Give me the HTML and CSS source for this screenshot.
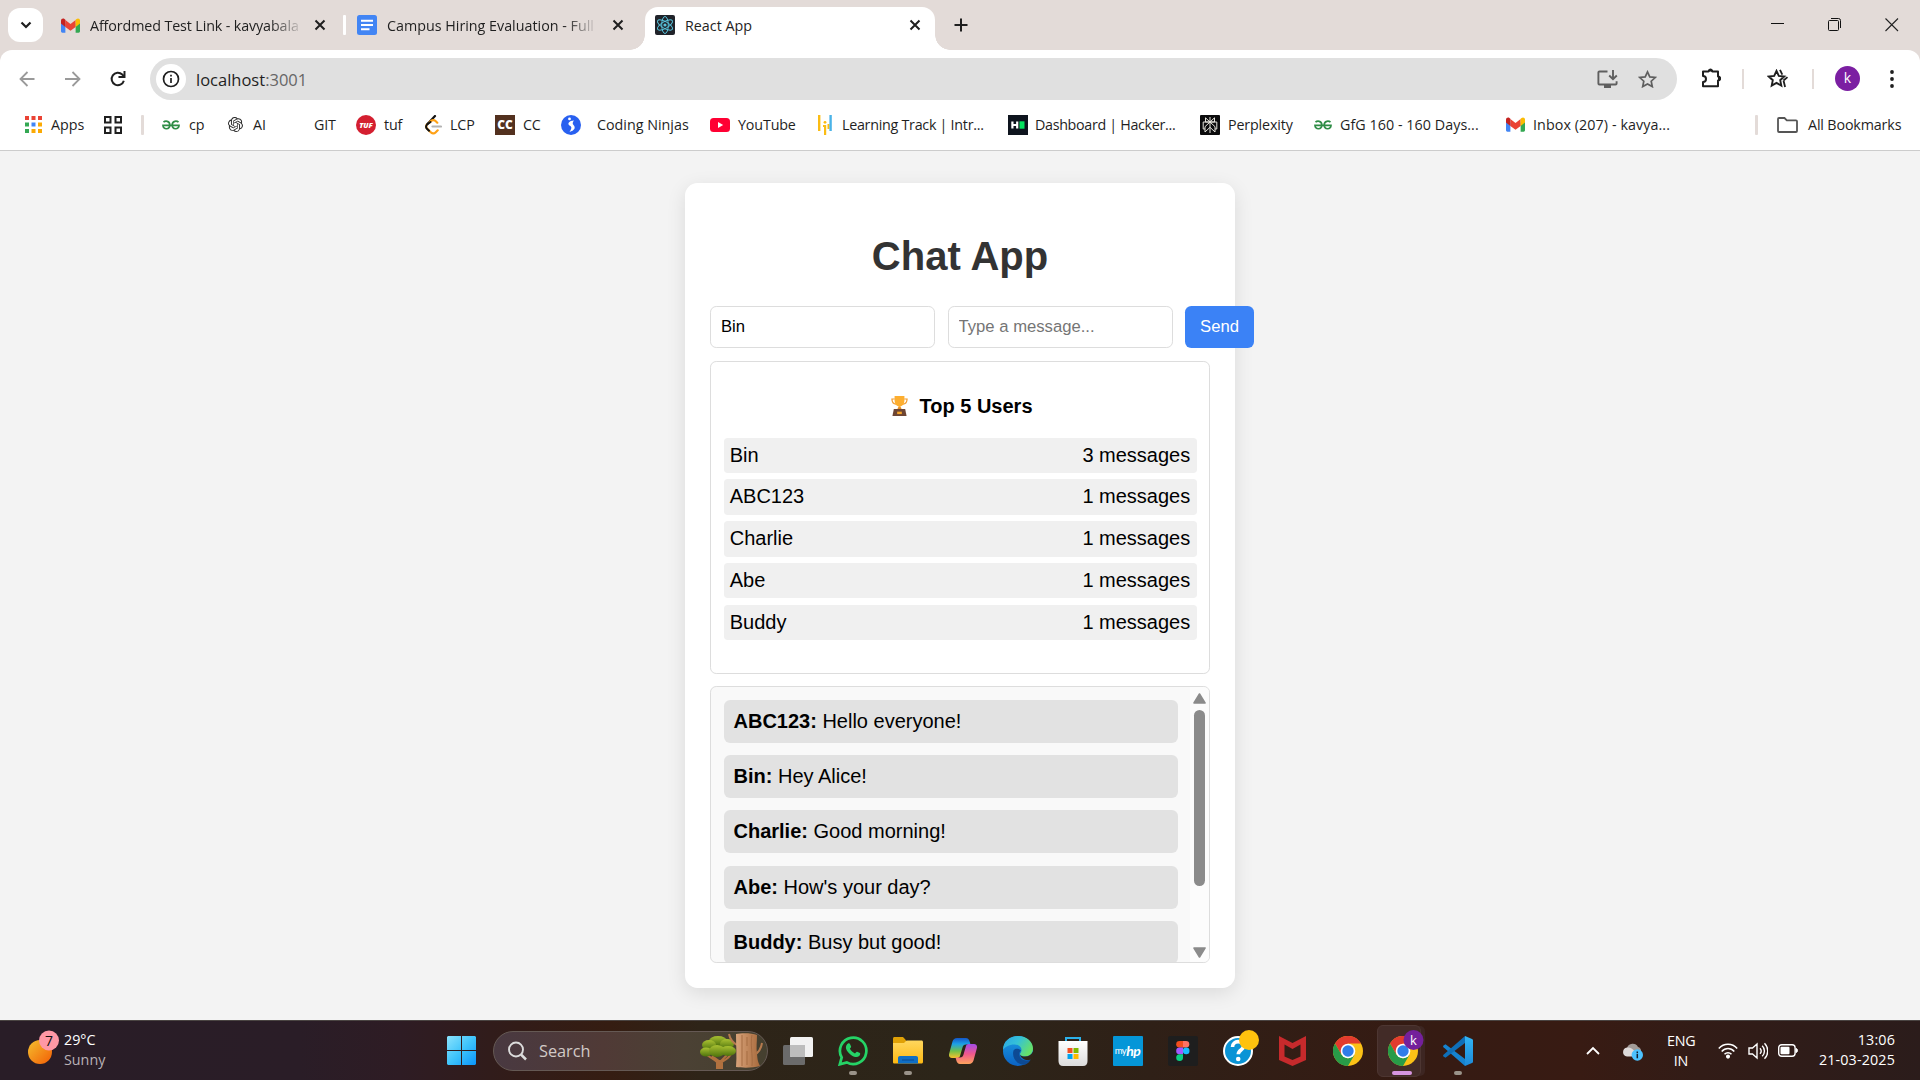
FILE: index.html
```html
<!DOCTYPE html>
<html lang="en">
<head>
<meta charset="utf-8">
<title>React App</title>
<link rel="stylesheet" href="styles.css">
</head>
<body>
<svg class="defs" width="0" height="0" aria-hidden="true">
  <defs>
    <linearGradient id="g-sun" x1="0" y1="0" x2="1" y2="1"><stop offset="0" stop-color="#f5c02f"/><stop offset="1" stop-color="#f25d05"/></linearGradient>
    <linearGradient id="g-win" x1="0" y1="0" x2="1" y2="1"><stop offset="0" stop-color="#8be3fc"/><stop offset=".5" stop-color="#3fc4fb"/><stop offset="1" stop-color="#0a95fb"/></linearGradient>
    <linearGradient id="g-fold" x1="0" y1="0" x2="0" y2="1"><stop offset="0" stop-color="#ffd75e"/><stop offset="1" stop-color="#fdb913"/></linearGradient>
    <linearGradient id="g-leaf" x1="0" y1="0" x2="0" y2="1"><stop offset="0" stop-color="#a9c132"/><stop offset="1" stop-color="#4d720c"/></linearGradient>
    <linearGradient id="g-bark" x1="0" y1="0" x2="1" y2="0"><stop offset="0" stop-color="#d8a37a"/><stop offset="1" stop-color="#a86a3c"/></linearGradient>
    <linearGradient id="g-co1" x1="0" y1="0" x2="0" y2="1"><stop offset="0" stop-color="#1456c8"/><stop offset=".3" stop-color="#1ca0e8"/><stop offset=".65" stop-color="#6fc04a"/><stop offset="1" stop-color="#f8c22c"/></linearGradient>
    <linearGradient id="g-co2" x1="0" y1="0" x2="0" y2="1"><stop offset="0" stop-color="#a34be8"/><stop offset=".5" stop-color="#f0588c"/><stop offset="1" stop-color="#fda45c"/></linearGradient>
    <linearGradient id="g-edge1" x1="0" y1="0" x2="1" y2=".5"><stop offset="0" stop-color="#2aa4e6"/><stop offset=".5" stop-color="#35c1d8"/><stop offset="1" stop-color="#66e06a"/></linearGradient>
    <linearGradient id="g-edge2" x1="0" y1="0" x2="0" y2="1"><stop offset="0" stop-color="#1b9de2"/><stop offset="1" stop-color="#0b62c4"/></linearGradient>
    <linearGradient id="g-vs" x1="0" y1="0" x2="0" y2="1"><stop offset="0" stop-color="#32b5f5"/><stop offset="1" stop-color="#1d8ad8"/></linearGradient>
    <linearGradient id="g-bag" x1="0" y1="0" x2="0" y2="1"><stop offset="0" stop-color="#fff"/><stop offset="1" stop-color="#dcdcdc"/></linearGradient>
    <symbol id="gmail" viewBox="0 0 20 15"><path fill="#4285f4" d="M0 2v11.6C0 14.4.6 15 1.4 15h3.2V5.5z"/><path fill="#34a853" d="M15.4 15h3.2c.8 0 1.4-.6 1.4-1.4V2l-4.6 3.5z"/><path fill="#ea4335" d="M4.6 9V1.8L10 5.9l5.4-4.1V9L10 13z"/><path fill="#fbbc04" d="M15.4 1.5V9L20 5.5V2.2c0-2-2.2-2.8-3.6-1.6z"/><path fill="#c5221f" d="M0 2.2v3.3L4.6 9V1.5L3.6.6C2.200-.6 0 .4 0 2.200z"/></symbol>
    <symbol id="close" viewBox="0 0 12 12"><path d="M1.500 1.500l9 9M10.500 1.500l-9 9" stroke="#1f1f1f" stroke-width="2" fill="none"/></symbol>
    <symbol id="gfg" viewBox="0 0 18 10"><g fill="none" stroke="#2f8d46" stroke-width="1.700"><path d="M1.500 2.200C3 .8 7.800.4 7.800 5c0 4.800-6.800 5-6.800.4h16c0 4.600-6.800 4.400-6.800-.4 0-4.600 4.800-4.200 6.300-2.800"/></g></symbol>
    <symbol id="chrome" viewBox="0 0 30 30"><circle cx="15" cy="15" r="15" fill="#fbc116"/><path fill="#e33b2e" d="M2 7.500A15 15 0 0 1 28 7.500H15L8.500 18.800z"/><path fill="#289b48" d="M2 7.500A15 15 0 0 0 15 30l6.500-11.200L15 22.500 8.500 18.800z"/><circle cx="15" cy="15" r="7.300" fill="#fff"/><circle cx="15" cy="15" r="5.700" fill="#2f7de9"/></symbol>
  </defs>
</svg>

<header class="browser">
  <div class="tabstrip">
    <button class="tabsearch"><svg width="12" height="8" viewBox="0 0 12 8"><path d="M1.500 1.500L6 6l4.500-4.500" fill="none" stroke="#1f1f1f" stroke-width="2.200"/></svg></button>
    <div class="tab tab-mail"><svg class="fav" width="19" height="15"><use href="#gmail"/></svg><span class="tab-title fade">Affordmed Test Link - kavyabala</span><svg width="12" height="12"><use href="#close"/></svg></div>
    <i class="tab-sep"></i>
    <div class="tab tab-docs"><svg class="fav" width="20" height="20" viewBox="0 0 20 20"><rect width="20" height="20" rx="2.500" fill="#4285f4"/><path d="M4 5.700h12M4 10h12M4 14.300h8.500" stroke="#fff" stroke-width="2"/></svg><span class="tab-title fade">Campus Hiring Evaluation - Full</span><svg width="12" height="12"><use href="#close"/></svg></div>
    <div class="tab tab-active"><svg class="fav" width="20" height="20" viewBox="0 0 20 20"><rect width="20" height="20" rx="2" fill="#20232a"/><g fill="none" stroke="#58c4dc" stroke-width="1"><ellipse cx="10" cy="10" rx="8.500" ry="3.300" transform="rotate(30 10 10)"/><ellipse cx="10" cy="10" rx="8.500" ry="3.300" transform="rotate(90 10 10)"/><ellipse cx="10" cy="10" rx="8.500" ry="3.300" transform="rotate(150 10 10)"/></g><circle cx="10" cy="10" r="1.600" fill="#58c4dc"/></svg><span class="tab-title">React App</span><svg width="12" height="12"><use href="#close"/></svg></div>
    <svg class="newtab" width="14" height="14" viewBox="0 0 14 14"><path d="M7 .5v13M.5 7h13" stroke="#1f1f1f" stroke-width="2"/></svg>
    <div class="winctl">
      <svg width="14" height="14" viewBox="0 0 14 14"><path d="M0 5.500h13" stroke="#111"/></svg>
      <svg width="14" height="14" viewBox="0 0 14 14" fill="none" stroke="#111"><rect x=".5" y="2.500" width="10" height="10" rx="1"/><path d="M3 .5h7.500a2 2 0 0 1 2 2V10"/></svg>
      <svg width="14" height="14" viewBox="0 0 14 14"><path d="M.5.500l12.500 12.500M13 .5L.5 13" stroke="#222" stroke-width="1.100"/></svg>
    </div>
  </div>

  <div class="toolbar">
    <svg class="nav-back" width="16" height="16" viewBox="0 0 16 16" fill="none" stroke="#9a9a9a" stroke-width="1.800"><path d="M15.500 8H1.500M8.500 1L1.500 8l7 7"/></svg>
    <svg class="nav-fwd" width="16" height="16" viewBox="0 0 16 16" fill="none" stroke="#9a9a9a" stroke-width="1.800"><path d="M0 8h14.500M7.500 1l7 7-7 7"/></svg>
    <svg class="nav-reload" width="16" height="16" viewBox="0 0 17 17" fill="none" stroke="#1f1f1f" stroke-width="2.100"><path d="M14.700 10.300A6.600 6.600 0 1 1 13 3.800l2 2"/><path d="M15.400 0v6.400H9"/></svg>
    <div class="omnibox">
      <span class="siteinfo"><svg width="18" height="18" viewBox="0 0 18 18"><circle cx="9" cy="9" r="7.500" fill="none" stroke="#1f1f1f" stroke-width="1.700"/><path d="M9 8v5M9 4.800v1.800" stroke="#1f1f1f" stroke-width="1.700"/></svg></span>
      <span class="url">localhost<span class="port">:3001</span></span>
      <svg class="install" width="21" height="18" viewBox="0 0 21 18" fill="none" stroke="#5f5f5f" stroke-width="1.900"><path d="M10.500 1.500H2.400a1 1 0 0 0-1 1v11a1 1 0 0 0 1 1h16.200a1 1 0 0 0 1-1v-2.200M16 0v9M12.200 5.500L16 9.200l3.800-3.700"/><path d="M7 16.500h7" stroke-width="3"/></svg>
      <svg class="star" width="19" height="18" viewBox="0 0 19 18"><path d="M9.500 1.900l2.300 5 5.400.6-4 3.700 1.100 5.400-4.800-2.700-4.800 2.700 1.100-5.400-4-3.700 5.400-.6z" fill="none" stroke="#5f5f5f" stroke-width="1.700"/></svg>
    </div>
    <svg class="ext" width="21" height="21" viewBox="0 0 21 21"><path d="M2 4.500h5.500a2 2 0 0 1 3.800 0H17v5a2 2 0 0 1 0 4v5.700H2v-4.300a2.800 2.800 0 0 0 0-6z" fill="none" stroke="#1f1f1f" stroke-width="2" stroke-linejoin="round"/><path d="M7.500 4a2 2 0 0 1 4 0zM17.500 9.500a2 2 0 0 1 0 4z" fill="#1f1f1f" stroke="#1f1f1f"/></svg>
    <i class="sep"></i>
    <svg class="media" width="22" height="19" viewBox="0 0 22 19"><path d="M9.500 1.900l2.300 5 5.400.6-4 3.700 1.100 5.400-4.800-2.700-4.800 2.700 1.100-5.400-4-3.700 5.400-.6z" fill="none" stroke="#1f1f1f" stroke-width="1.900"/><path d="M13 .8l2.300 4.800M16.500 11.500l4-3.400M16.500 11.500l1.600 6.500" fill="none" stroke="#1f1f1f" stroke-width="1.800"/></svg>
    <i class="sep"></i>
    <span class="avatar">k</span>
    <svg class="dots" width="4" height="18" viewBox="0 0 4 18" fill="#1f1f1f"><circle cx="2" cy="2" r="1.900"/><circle cx="2" cy="9" r="1.900"/><circle cx="2" cy="16" r="1.900"/></svg>
  </div>

  <nav class="bookmarks">
    <a class="bm bm-apps"><svg width="17" height="17" viewBox="0 0 17 17"><path fill="#ea4335" d="M0 0h4v4H0zM6.500 0h4v4h-4zM13 0h4v4h-4z"/><path fill="#34a853" d="M0 6.500h4v4H0z"/><path fill="#4285f4" d="M6.500 6.500h4v4h-4z"/><path fill="#fbaa04" d="M13 6.500h4v4h-4zM6.500 13h4v4h-4zM13 13h4v4h-4z"/><path fill="#34a853" d="M0 13h4v4H0z"/></svg><span>Apps</span></a>
    <a class="bm bm-grid"><svg width="18" height="18" viewBox="0 0 18 18" fill="none" stroke="#1f1f1f" stroke-width="2"><path d="M1 1h5.500v5.500H1zM11.500 1H17v5.500h-5.500zM1 11.500h5.500V17H1zM11.500 11.500H17V17h-5.500z"/></svg></a>
    <i class="bsep"></i>
    <a class="bm bm-cp"><svg width="18" height="10"><use href="#gfg"/></svg><span>cp</span></a>
    <a class="bm bm-ai"><svg width="15" height="15" viewBox="0 0 24 24" fill="#2b2b2b"><path d="M22.280 9.820a5.980 5.980 0 0 0-.52-4.910 6.050 6.050 0 0 0-6.510-2.900A6.070 6.070 0 0 0 4.980 4.180a5.980 5.980 0 0 0-4 2.900 6.050 6.050 0 0 0 .74 7.100 5.980 5.980 0 0 0 .51 4.910 6.050 6.050 0 0 0 6.520 2.900A5.980 5.980 0 0 0 13.260 24a6.060 6.060 0 0 0 5.770-4.210 5.990 5.990 0 0 0 4-2.900 6.060 6.060 0 0 0-.75-7.070zm-9.020 12.610a4.480 4.480 0 0 1-2.880-1.040l4.920-2.840a.8.8 0 0 0 .39-.68v-6.740l2.020 1.170v5.630a4.500 4.500 0 0 1-4.450 4.500zM3.600 18.300a4.470 4.470 0 0 1-.54-3.010l4.930 2.850a.77.77 0 0 0 .78 0l5.840-3.370v2.330l-4.870 2.840a4.500 4.500 0 0 1-6.140-1.640zM2.340 7.900a4.490 4.490 0 0 1 2.370-1.980v5.700a.77.77 0 0 0 .39.680l5.810 3.350-2.020 1.170-4.830-2.790A4.500 4.500 0 0 1 2.340 7.900zm16.600 3.860L13.100 8.360l2.020-1.160 4.830 2.790a4.490 4.490 0 0 1-.68 8.100v-5.680a.79.79 0 0 0-.33-.65zm2-3.020l-4.910-2.870a.78.78 0 0 0-.79 0L9.410 9.230V6.900l4.900-2.830a4.500 4.500 0 0 1 6.630 4.670zM8.310 12.860l-2.020-1.160V6.070a4.500 4.500 0 0 1 7.370-3.450L8.700 5.460a.8.8 0 0 0-.39.680zm1.100-2.360L12 9l2.610 1.500v3L12 15l-2.600-1.500z"/></svg><span>AI</span></a>
    <a class="bm bm-git"><span>GIT</span></a>
    <a class="bm bm-tuf"><b class="ic-tuf">TUF</b><span>tuf</span></a>
    <a class="bm bm-lcp"><svg width="17" height="20" viewBox="0 0 17 20" fill="none" stroke-linecap="round"><path d="M10 1L2 9.500" stroke="#111" stroke-width="2.200"/><path d="M2 9.500c-1.300 1.500-1 3 0 4L5.500 17c1.500 1.500 3.500 2 5 .5l2.200-2.200M4.500 7.500C7 4.500 9 4.600 10.500 6l1.800 1.700" stroke="#ffa116" stroke-width="2.200"/><path d="M5.500 7L2 9.500c-1.200 1.500-1 3.200 0 4.300l2 2" stroke="#111" stroke-width="2"/><path d="M7.500 11.500H16" stroke="#b3b3b3" stroke-width="2.200"/></svg><span>LCP</span></a>
    <a class="bm bm-cc"><b class="ic-cc">CC</b><span>CC</span></a>
    <a class="bm bm-cn"><svg width="20" height="20" viewBox="0 0 20 20"><circle cx="10" cy="10" r="10" fill="#2860f0"/><path d="M13 5.500C8 5.500 6 9 8.500 10.500s2.500 2.500 0 6.500c5-1.500 6.500-4.500 4-7-1.200-1.300-1-2.700.5-4.500z" fill="#fff"/><circle cx="8.500" cy="3.900" r="1.400" fill="#fff"/></svg><span>Coding Ninjas</span></a>
    <a class="bm bm-yt"><svg width="20" height="14" viewBox="0 0 20 14"><rect width="20" height="14" rx="3.500" fill="#f03"/><path d="M8 4l5.200 3L8 10z" fill="#fff"/></svg><span>YouTube</span></a>
    <a class="bm bm-lt"><svg width="14" height="20" viewBox="0 0 14 20"><path fill="#fbbc14" d="M0 0h2.400v16H0zM5 10h3.200v10H6V12H5z"/><circle cx="7" cy="7.300" r="1.400" fill="#fbbc14"/><path fill="#fbbc14" d="M9.500 9h2v5h-2z"/><path fill="#4ab3e8" d="M11.400 0h2.400v16h-2.400z"/></svg><span>Learning Track | Intr...</span></a>
    <a class="bm bm-hr"><svg width="20" height="20" viewBox="0 0 20 20"><path fill="#0e141e" d="M0 0h20v20H0z"/><path d="M4.400 6.500v7M9.200 6.500v7M4.400 10h5" stroke="#fff" stroke-width="2.200"/><path fill="#05e25f" d="M11.500 6.300h5v7.400h-5z"/></svg><span>Dashboard | Hacker...</span></a>
    <a class="bm bm-px"><svg width="20" height="20" viewBox="0 0 20 20"><rect width="20" height="20" rx="1" fill="#0b0b0c"/><path d="M10 2v16M5.500 2.800V7L10 7l4.500-4.200V7H10L5.500 2.800M10 7l-5 4.700V17l5-4.700 5 4.700v-5.300L10 7M5 14H3.200V7h13.600v7H15" fill="none" stroke="#e6e4dc" stroke-width="1"/></svg><span>Perplexity</span></a>
    <a class="bm bm-gfg"><svg width="18" height="10"><use href="#gfg"/></svg><span>GfG 160 - 160 Days...</span></a>
    <a class="bm bm-inbox"><svg width="19" height="15"><use href="#gmail"/></svg><span>Inbox (207) - kavya...</span></a>
    <i class="bsep bsep-end"></i>
    <a class="bm bm-all"><svg width="21" height="16" viewBox="0 0 21 16"><path d="M1 2a1 1 0 0 1 1-1h5.500l2.300 2.300H19a1 1 0 0 1 1 1V14a1 1 0 0 1-1 1H2a1 1 0 0 1-1-1z" fill="none" stroke="#555" stroke-width="1.800"/></svg><span>All Bookmarks</span></a>
  </nav>
</header>

<main class="page">
  <section class="chat">
    <h1>Chat App</h1>
    <form class="compose">
      <input type="text" value="Bin">
      <input type="text" placeholder="Type a message...">
      <button type="button">Send</button>
    </form>
    <div class="top-users">
      <h3><svg width="17" height="20" viewBox="0 0 18 23" preserveAspectRatio="none"><path d="M4 3.500H1C1 8 2.800 9.300 5.500 9.500M14 3.500h3c0 4.500-1.800 5.800-4.500 6" fill="none" stroke="#f0992c" stroke-width="1.300"/><path fill="#fdae2f" d="M3.800 0h10.400v5.500c0 4-2 6-4.200 6.500v3H8v-3c-2.200-.5-4.200-2.500-4.200-6.500z"/><path fill="#e58b22" d="M7.500 13h3l1 3h-5z"/><path fill="#6d4534" d="M3 15h12l1.500 8H1.500z"/><path fill="#f6a62b" d="M6.500 18h5v2.800h-5z"/></svg><span>Top 5 Users</span></h3>
      <ul>
        <li><span>Bin</span><span>3 messages</span></li>
        <li><span>ABC123</span><span>1 messages</span></li>
        <li><span>Charlie</span><span>1 messages</span></li>
        <li><span>Abe</span><span>1 messages</span></li>
        <li><span>Buddy</span><span>1 messages</span></li>
      </ul>
    </div>
    <div class="feed">
      <div class="messages">
        <p><strong>ABC123:</strong> Hello everyone!</p>
        <p><strong>Bin:</strong> Hey Alice!</p>
        <p><strong>Charlie:</strong> Good morning!</p>
        <p><strong>Abe:</strong> How's your day?</p>
        <p><strong>Buddy:</strong> Busy but good!</p>
      </div>
      <div class="scrollbar">
        <svg width="13" height="11" viewBox="0 0 13 11"><path d="M6.500 1L12 10H1z" fill="#8b8b8b" stroke="#8b8b8b" stroke-width="1.600" stroke-linejoin="round"/></svg>
        <i class="thumb"></i>
        <svg class="down" width="13" height="11" viewBox="0 0 13 11"><path d="M6.500 10L12 1H1z" fill="#8b8b8b" stroke="#8b8b8b" stroke-width="1.600" stroke-linejoin="round"/></svg>
      </div>
    </div>
  </section>
</main>

<footer class="taskbar">
  <div class="weather">
    <svg width="36" height="36" viewBox="0 0 36 36"><circle cx="12" cy="22" r="12" fill="url(#g-sun)"/><circle cx="21" cy="10.500" r="10" fill="#ff98a5"/><text x="21" y="15.500" text-anchor="middle" class="badge-num">7</text></svg>
    <div><span class="temp">29°C</span><span class="cond">Sunny</span></div>
  </div>
  <div class="apps">
    <svg class="win" width="29" height="29" viewBox="0 0 29 29"><path fill="url(#g-win)" d="M1 0h13v14H0V1zM15 0h13l1 1v13H15zM0 15h14v14H1l-1-1zM15 15h14v13l-1 1H15z"/></svg>
    <div class="search">
      <svg width="19" height="20" viewBox="0 0 19 20" fill="none" stroke="#dcdcdc"><circle cx="8" cy="8.500" r="7" stroke-width="1.900"/><path d="M13 13.500l5 5" stroke-width="2.500"/></svg>
      <span>Search</span>
      <svg class="tree" width="64" height="36" viewBox="0 0 64 36"><path d="M7 22c4 3 8 5 10 7v6h5v-6c3-2 7-4 9-8M12 23l7 5M27 22l-6 6" fill="none" stroke="#b1713f" stroke-width="2"/><path d="M17 27h5v8h-5z" fill="#b1713f"/><g fill="url(#g-leaf)"><ellipse cx="18" cy="8" rx="9" ry="5"/><ellipse cx="9" cy="12" rx="7" ry="5"/><ellipse cx="27" cy="11" rx="7" ry="5"/><ellipse cx="6" cy="19" rx="6" ry="4.500"/><ellipse cx="17" cy="18" rx="8" ry="6"/><ellipse cx="28" cy="18" rx="8" ry="5"/></g><path d="M29 1c1 5 3 8 8 11M62 10c-1 7-4 10-8 12" fill="none" stroke="#b57a4e" stroke-width="2"/><path d="M36 1c6-1 16-1 21 1 0 7-1 12 0 19 .5 6 1 8 3 12-7 2-17 2-24 1 1-11 0-22 0-33z" fill="url(#g-bark)"/><path d="M42 2v31M47 4v9M52 2c-2 9 1 20 0 31M47 18v14" stroke="#a56c42" fill="none"/></svg>
    </div>
    <svg class="taskview" width="30" height="28" viewBox="0 0 30 28"><rect y="8" width="22" height="20" rx="1.500" fill="#6b6b6b"/><rect x="7" width="23" height="20" rx="1.500" fill="#f2f2f2"/><path fill="#bdbdbd" d="M7 8h15v12H8.500L7 18.500z"/></svg>
    <div class="app run"><svg width="30" height="30" viewBox="0 0 30 30"><path d="M1.800 28.300l1.900-6.900a13.200 13.200 0 1 1 5.100 5z" fill="none" stroke="#25d366" stroke-width="2.700"/><path fill="#25d366" d="M10 7.500c1-.6 1.700-.3 2.100.7l1 2.300c.2.600-.8 1.700-1.200 2.200 1.200 2.300 2.800 3.700 5.100 4.700.6-.6 1.500-2 2.200-1.700l2.700 1.300c.7.400.2 2.400-.7 3.100-2 1.600-4.800.9-7.500-.7-2.600-1.600-5-4.400-5.700-6.900-.5-2.200.7-4.200 2-5z"/></svg></div>
    <div class="app run"><svg width="30" height="27" viewBox="0 0 30 27"><path fill="#e0a106" d="M0 1.500C0 .6.600 0 1.500 0H10l3 3.200v4H0z"/><path fill="url(#g-fold)" d="M0 6h11l2.500-2.500h15c.9 0 1.500.6 1.500 1.500v20c0 .9-.6 1.500-1.500 1.500h-27C.6 26.500 0 26 0 25z"/><path fill="#0f6fc5" d="M5 26.500V21c0-1.200.8-2 2-2h16c1.200 0 2 .8 2 2v5.500z"/><path d="M9 23h12" stroke="#0a4b91"/></svg></div>
    <div class="app"><svg width="28" height="26" viewBox="0 0 28 26"><path fill="url(#g-co1)" d="M8 0h9c2 0 3 1.500 3.500 3l1 3.500H17c-2 0-3 1-3.500 3L11 18c-.5 1.600-1.500 2-3.500 2H3c-2.600 0-3.500-2-2.800-4.500l3.300-12C4.200 1.300 5.700 0 8 0z"/><path fill="url(#g-co2)" d="M20 26h-9c-2 0-3-1.500-3.500-3l-1-3.500H11c2 0 3-1 3.500-3L17 8c.5-1.600 1.500-2 3.500-2H25c2.600 0 3.500 2 2.800 4.500l-3.300 12C23.800 24.700 22.300 26 20 26z"/></svg></div>
    <div class="app"><svg width="30" height="30" viewBox="0 0 30 30"><circle cx="15" cy="15" r="15" fill="url(#g-edge2)"/><path fill="url(#g-edge1)" d="M0 14C0 5 7 0 15 0c9 0 15 6 15 12.500 0 5-3.500 8-8 8-3.500 0-5-1.500-5-2.500s1.500-1.300 1.500-4c0-3-3-5.500-7-5.500C6 8.500 1.500 11 0 14z"/><path fill="#0d4a94" d="M10.500 14.500c-2 7 3 14.500 11.500 14.200 3.500-1.500 5-3.500 5.700-5.200-6.500 2.500-12.200-.5-11.200-6.500.3-1.500 1-2 1.500-2.500-2-2-6-2.500-7.500 0z"/><path fill="#2f2517" d="M30 15.500c-1.500 3.500-4.500 5-8 5-2.500 0-4.300-.8-4.900-1.800 1 4 6 6.500 10.600 4.800.5 0 1 .3.600.9l3.700-.4z"/></svg></div>
    <div class="app"><svg width="30" height="30" viewBox="0 0 30 30"><path d="M8 7V2h14v5" fill="none" stroke="#2cb1ea" stroke-width="2"/><path fill="url(#g-bag)" d="M.5 5h29v20c0 3-1.500 5-4.500 5H5c-3 0-4.500-2-4.500-5z"/><path fill="#f25022" d="M9.500 12h5v5h-5z"/><path fill="#7fba00" d="M15.500 12h5v5h-5z"/><path fill="#00a4ef" d="M9.500 18h5v5h-5z"/><path fill="#ffb900" d="M15.500 18h5v5h-5z"/></svg></div>
    <div class="app"><span class="myhp"><em>my</em><b>hp</b></span></div>
    <div class="app"><svg width="30" height="30" viewBox="0 0 30 30"><rect width="30" height="30" rx="2" fill="#1e1e1e"/><path fill="#f24e1e" d="M15 5h-3.500a3.300 3.300 0 0 0 0 6.600H15z"/><path fill="#ff7262" d="M15 5h3a3.300 3.300 0 0 1 0 6.600h-3z"/><path fill="#a259ff" d="M15 11.600h-3.500a3.300 3.300 0 0 0 0 6.600H15z"/><circle cx="18.200" cy="14.900" r="3.300" fill="#1abcfe"/><path fill="#0acf83" d="M15 18.200h-3.500a3.400 3.400 0 1 0 3.500 3.300z"/></svg></div>
    <div class="app"><svg class="help" width="36" height="36" viewBox="0 0 36 36"><circle cx="15" cy="21" r="14" fill="#0a94d6" stroke="#fff" stroke-width="2"/><path d="M9.500 17c0-7 11-7 11-.8 0 4-5.200 3.600-5.200 8" fill="none" stroke="#fff" stroke-width="3.600"/><circle cx="15.200" cy="29" r="2.300" fill="#fff"/><circle cx="26" cy="10" r="10" fill="#ffc20e"/></svg></div>
    <div class="app"><svg width="27" height="30" viewBox="0 0 27 30"><path fill="#c62a2c" d="M0 0l13.500 7L27 0v24l-13.500 6L0 24zM5.500 8.500v12l8 3.500 8-3.500v-12l-8 4.500z" fill-rule="evenodd"/></svg></div>
    <div class="app"><svg width="30" height="30"><use href="#chrome"/></svg></div>
    <div class="app current"><svg class="chrome-k" width="36" height="36" viewBox="0 0 36 36"><use href="#chrome" x="0" y="6" width="30" height="30"/><circle cx="25.500" cy="10" r="10" fill="#74209b"/><text x="25.500" y="14.500" text-anchor="middle" class="chrome-letter">k</text></svg></div>
    <div class="app run"><svg width="30" height="30" viewBox="0 0 30 30"><path fill="#1683cf" d="M2.500 8.200L22 23v7L.5 11.200c-.6-.6-.6-1.200 0-1.700z"/><path fill="#0f6fb8" d="M2.500 21.800L22 7V0L.5 18.800c-.6.600-.6 1.200 0 1.700z"/><path fill="url(#g-vs)" d="M22 0l7 3c.7.400 1 .8 1 1.600v20.800c0 .8-.3 1.200-1 1.600l-7 3z"/></svg></div>
  </div>
  <div class="tray">
    <svg class="caret" width="14" height="9" viewBox="0 0 14 9"><path d="M1 8l6-6 6 6" fill="none" stroke="#fff" stroke-width="1.800"/></svg>
    <svg class="cloud" width="20" height="18" viewBox="0 0 20 18"><path fill="#a39c99" d="M4 5a6 6 0 0 1 11-1c2 .5 3 2 3 4L8 12z"/><path fill="#dedada" d="M4 4.500c3-.5 5 .5 8 4l-1 5H4C-1.500 13-1 5 4 4.500z"/><circle cx="14.300" cy="12" r="5.700" fill="#4cc2ff"/><path d="M14.300 11v4.200M14.300 8.500v1.700" stroke="#123" stroke-width="1.500"/></svg>
    <div class="lang"><span>ENG</span><span>IN</span></div>
    <svg class="wifi" width="20" height="16" viewBox="0 0 20 16" fill="none" stroke="#fff" stroke-width="1.500"><path d="M.8 5.500c5-5.600 13.400-5.600 18.400 0M3.700 8.500c3.500-4 9.100-4 12.600 0M6.500 11.300c2-2.200 5-2.200 7 0"/><circle cx="10" cy="13.600" r="1.300" fill="#fff"/></svg>
    <svg class="vol" width="20" height="18" viewBox="0 0 20 18" fill="none" stroke="#fff" stroke-width="1.400"><path d="M1 6h3.500L9 2v14l-4.500-4H1zM12 6.200c1.400 1.600 1.400 4 0 5.600M14.200 3.700c3 3 3 7.600 0 10.600M16.500 1.200c4.300 4.300 4.300 11.300 0 15.600"/></svg>
    <svg class="bat" width="20" height="13" viewBox="0 0 20 13"><rect x=".7" y=".7" width="16.400" height="11.600" rx="3" fill="none" stroke="#fff" stroke-width="1.400"/><rect x="2.500" y="2.700" width="9" height="7.600" rx="1" fill="#fff"/><path d="M18 4.500c2 .3 2 3.700 0 4z" fill="#fff" stroke="#fff"/></svg>
    <div class="clock"><span>13:06</span><span>21-03-2025</span></div>
  </div>
</footer>
</body>
</html>
```
FILE: styles.css
```css
* { box-sizing: border-box; }
body { margin: 0; width: 1920px; height: 1080px; overflow: hidden; display: flex; flex-direction: column; font-family: "Liberation Sans", Arial, sans-serif; background: #f3f3f3; }
svg { display: block; flex: none; }
.defs { position: absolute; }
i, em { font-style: normal; }

/* Browser chrome */
.browser { height: 151px; flex: none; background: #e3dbd8; border-bottom: 1px solid #ccc; font-family: "Open Sans", "Noto Sans", sans-serif; color: #1f1f1f; display: flex; flex-direction: column; }
.tabstrip { height: 50px; display: flex; align-items: center; padding-left: 8px; }
.tabsearch { width: 35px; height: 34px; border: 0; border-radius: 12px; background: #fff; display: flex; align-items: center; justify-content: center; padding: 0; margin: 0; }
.tab { display: flex; align-items: center; font-size: 14.300px; }
.tab-title { white-space: nowrap; overflow: hidden; flex: 1; letter-spacing: -0.200px; line-height: 22px; padding-top: 2px; }
.tab-mail { width: 265px; margin-left: 18px; }
.tab-mail .fav { margin-right: 10px; }
.tab-mail .tab-title { flex: 0 0 210px; margin-right: 14px; letter-spacing: -0.120px; }
.tab-sep { width: 3px; height: 20px; background: #fff; margin: 0 11px 0 17px; border-radius: 1px; }
.tab-docs { width: 266px; }
.tab-docs .fav { margin-right: 10px; }
.tab-docs .tab-title { flex: 0 0 207px; margin-right: 18px; letter-spacing: 0; }
.fade { -webkit-mask-image: linear-gradient(90deg, #000 86%, transparent 102%); mask-image: linear-gradient(90deg, #000 86%, transparent 102%); }
.tab-active { position: relative; width: 290px; height: 43px; align-self: flex-end; margin-left: 22px; padding: 0 14px 7px 10px; background: #fff; border-radius: 13px 13px 0 0; }
.tab-active .fav { margin-right: 10px; }
.tab-active .tab-title { letter-spacing: 0; }
.tab-active::before, .tab-active::after { content: ""; position: absolute; bottom: 0; width: 15px; height: 15px; }
.tab-active::before { left: -15px; background: radial-gradient(circle at 0 0, transparent 14.500px, #fff 15px); }
.tab-active::after { right: -15px; background: radial-gradient(circle at 100% 0, transparent 14.500px, #fff 15px); }
.newtab { margin-left: 19px; }
.winctl { margin-left: auto; display: flex; gap: 43px; padding-right: 21px; }

.toolbar { height: 55px; background: #fff; border-radius: 12px 12px 0 0; display: flex; align-items: center; padding: 2px 26px 0 19px; }
.nav-fwd { margin-left: 30px; }
.nav-reload { margin-left: 29px; }
.omnibox { width: 1527px; height: 42px; margin: 1px 0 0 24px; border-radius: 21px; background: #e0e0e0; display: flex; align-items: center; padding-left: 6px; }
.siteinfo { width: 30px; height: 30px; border-radius: 50%; background: #fff; display: flex; align-items: center; justify-content: center; }
.url { font-size: 16.500px; margin-left: 10px; line-height: 24px; padding-top: 2px; }
.port { color: #666; }
.install { margin-left: auto; }
.star { margin: 0 20px; }
.ext { margin-left: 24px; margin-top: -3px; }
.sep { width: 2px; height: 20px; background: #e3dbd8; margin-left: 20px; }
.media { margin-left: 23px; }
.media + .sep { margin-left: 23px; }
.avatar { width: 25px; height: 25px; border-radius: 50%; background: #7b1fa2; color: #fff; font-size: 14px; line-height: 23px; text-align: center; margin-left: 21px; }
.dots { margin-left: auto; }

.bookmarks { height: 45px; background: #fff; display: flex; align-items: center; padding: 0 0 6px 25px; font-size: 14.300px; letter-spacing: -0.150px; }
.bm { display: flex; align-items: center; white-space: nowrap; flex: none; height: 24px; gap: 8px; }
.bm-apps { width: 79px; gap: 9px; letter-spacing: 0; }
.bm-grid { width: 37px; }
.bsep { width: 3px; height: 20px; background: #e3dbd8; border-radius: 1px; flex: none; }
.bm-cp { width: 66px; margin-left: 18px; gap: 9px; }
.bm-ai { width: 86px; gap: 10px; }
.bm-git { width: 42px; }
.bm-tuf { width: 69px; }
.bm-lcp { width: 70px; }
.bm-cc { width: 66px; }
.bm-cn { width: 149px; gap: 16px; letter-spacing: 0; }
.bm-yt { width: 108px; }
.bm-lt { width: 190px; gap: 10px; letter-spacing: -0.270px; }
.bm-hr { width: 192px; gap: 7px; letter-spacing: -0.320px; }
.bm-px { width: 114px; }
.bm-gfg { width: 192px; letter-spacing: 0.050px; }
.bm-inbox { width: 249px; gap: 8px; letter-spacing: 0.080px; }
.bm-all { margin-left: 19px; gap: 10px; }
.ic-tuf { width: 20px; height: 20px; border-radius: 50%; background: #d41f30; color: #fff; font: italic 800 7.500px/20px "Open Sans", sans-serif; letter-spacing: 0; text-align: center; }
.ic-cc { width: 20px; height: 20px; background: #53311f; color: #fff; font: 800 12px/19px "Open Sans", sans-serif; letter-spacing: 0; text-align: center; }

/* Chat page */
.page { flex: 1; min-height: 0; padding-top: 32px; display: flex; justify-content: center; align-items: flex-start; }
.chat { width: 550px; height: 805px; padding: 25px; background: #fff; border-radius: 12.500px; box-shadow: 0 5px 18.750px rgba(0, 0, 0, .1); }
.chat h1 { margin: 25px 0 27px; font-size: 40px; line-height: 46px; color: #333; text-align: center; }
.compose { display: flex; gap: 12.500px; margin: 0; width: 544px; }
.compose input { width: 225px; height: 42px; padding: 0 10px; border: 1px solid #ddd; border-radius: 6.250px; font: 16.667px "Liberation Sans", Arial, sans-serif; color: #000; background: #fff; }
.compose input::placeholder { color: #757575; }
.compose button { flex: none; width: 69px; height: 42px; padding: 0; border: 0; border-radius: 6.250px; background: #3b82f6; color: #fff; font: 16.667px "Liberation Sans", Arial, sans-serif; }
.top-users { height: 313px; margin-top: 13px; padding: 12.500px; border: 1px solid #ddd; border-radius: 6.250px; font-size: 20px; line-height: 23px; }
.top-users h3 { margin: 19px 0; padding-left: 3px; font-size: 20px; line-height: 25px; display: flex; gap: 12px; justify-content: center; align-items: center; }
.top-users ul { list-style: none; margin: 0; padding: 0; }
.top-users li { display: flex; justify-content: space-between; height: 35.500px; padding: 6px 6.250px; margin-bottom: 6.250px; background: #f0f0f0; border-radius: 3.750px; }
.feed { height: 277px; margin-top: 12px; border: 1px solid #ddd; border-radius: 6.250px; background: #f9f9f9; display: flex; overflow: hidden; }
.messages { width: 479px; padding: 12.700px 12px 0 13px; overflow: hidden; font-size: 20px; line-height: 23px; }
.messages p { margin: 0 0 12.500px; padding: 10px 9.500px; height: 42.900px; background: #e2e2e2; border-radius: 6.250px; }
.scrollbar { width: 19px; background: #fcfcfc; padding: 6px 0 4px; display: flex; flex-direction: column; align-items: center; }
.thumb { width: 11px; height: 176px; border-radius: 6px; background: #8b8b8b; margin-top: 6px; }
.down { margin-top: auto; }

/* Taskbar */
.taskbar { height: 60px; flex: none; border-top: 1px solid #4a4442; display: flex; align-items: center; font-family: "Open Sans", "Noto Sans", sans-serif; color: #fff; font-size: 14.300px; background: linear-gradient(90deg, #291d27 0, #2a1d27 300px, #2e1c24 400px, #321c18 520px, #351d12 610px, #2e2418 700px, #2c2519 960px, #2f2017 1150px, #351b13 1400px, #381b13 1580px, #321c17 1700px, #2b1c1b 1920px); }
.weather { width: 447px; padding-left: 28px; display: flex; align-items: center; }
.weather div { display: flex; flex-direction: column; line-height: 20px; margin-top: -2px; }
.weather svg { margin-top: -5px; }
.cond { color: #b9b2b6; }
.badge-num { font-size: 14px; fill: #111; }
.apps { display: flex; align-items: center; height: 59px; }
.search { width: 275px; height: 40px; margin-left: 17px; border-radius: 20px; border: 1px solid #655954; background: linear-gradient(90deg, #493941, #503a36 40%, #4b4134 70%, #45402f); display: flex; align-items: center; padding: 0 3px 0 14px; }
.search span { margin-left: 12px; font-size: 16.300px; color: #d2cac7; }
.tree { margin-left: auto; }
.taskview { margin: 0 27px 0 15px; }
.app { width: 55px; height: 59px; display: flex; align-items: center; justify-content: center; position: relative; }
.taskview + .app { margin-left: -15px; }
.app.run::after, .app.current::after { content: ""; position: absolute; left: 50%; bottom: 5px; width: 8px; height: 4px; margin-left: -4px; border-radius: 2px; background: #9a9389; }
.app.current::before { content: ""; position: absolute; z-index: -1; left: 2px; right: 9px; top: 4px; height: 50px; border-radius: 6px; border: 1px solid #4d3632; background: #422b27; box-shadow: 5px 0 0 -1px #3d2622; }
.app.current { z-index: 0; }
.app.current::after { width: 20px; margin-left: -11px; background: #d795e0; }
.help, .chrome-k { margin: -6px 0 0 6px; }
.chrome-letter { font-size: 13px; fill: #fff; }
.myhp { width: 30px; height: 30px; background: #0596d8; border-radius: 1px; color: #fff; display: flex; align-items: center; justify-content: center; font-family: Lato, sans-serif; letter-spacing: -0.500px; line-height: 28px; }
.myhp em { font-size: 9.500px; }
.myhp b { font-size: 14px; font-style: italic; }
.tray { margin-left: auto; padding-right: 25px; display: flex; align-items: center; }
.cloud { margin: 3px 24px 0 23px; }
.lang, .clock { display: flex; flex-direction: column; line-height: 20px; text-align: center; }
.lang { width: 28px; letter-spacing: -0.200px; }
.wifi { margin-left: 23px; }
.vol { margin: 0 10px; }
.clock { text-align: right; width: 97px; white-space: nowrap; margin-top: -2px; letter-spacing: 0.150px; }
```
